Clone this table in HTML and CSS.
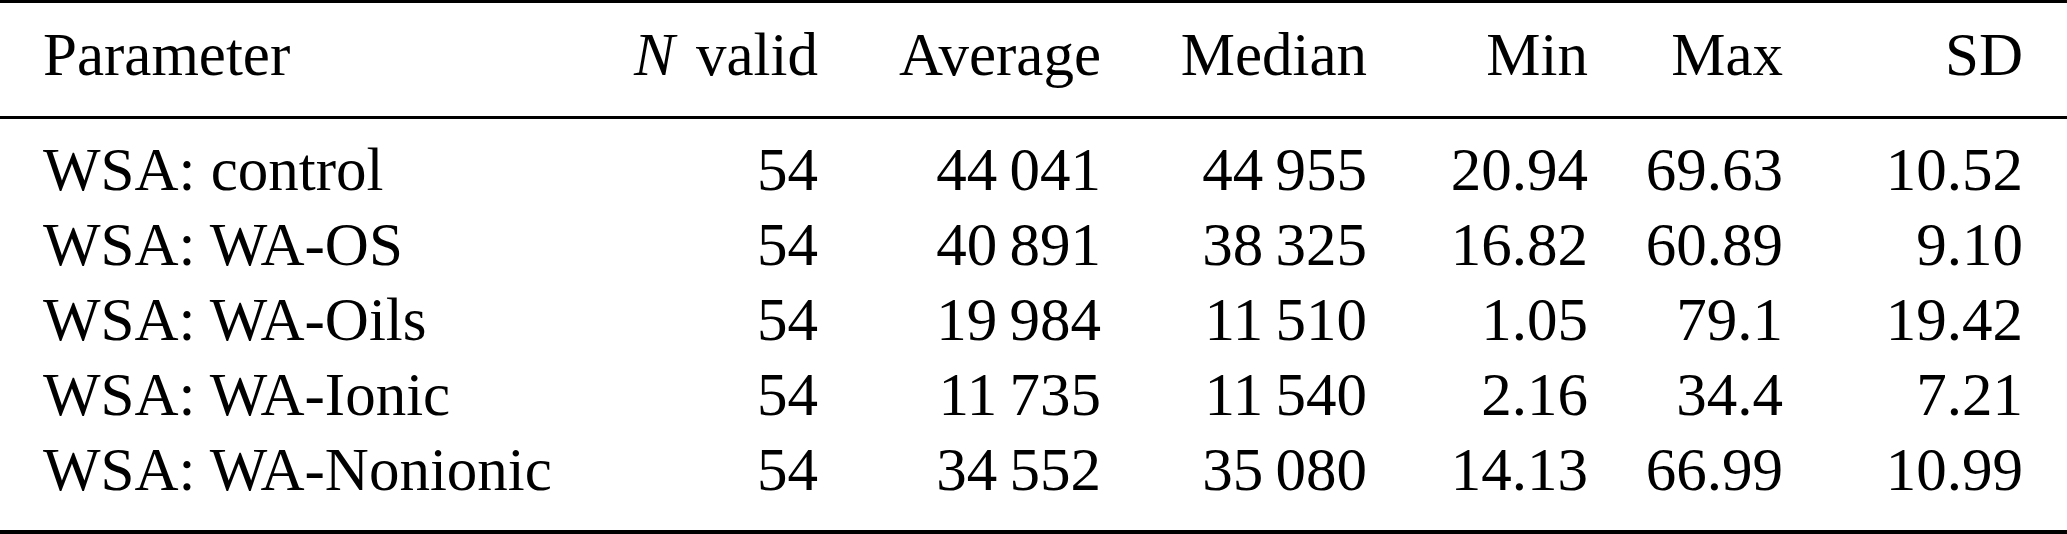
FILE: index.html
```html
<!DOCTYPE html>
<html lang="en">
<head>
    <meta charset="UTF-8">
    <meta name="viewport" content="width=device-width, initial-scale=1.0">
    <title>WSA Statistics</title>
    <link rel="stylesheet" href="styles.css">
</head>
<body>

<!-- Descriptive statistics table -->
<table class="stats">
    <colgroup>
        <col class="col-param">
        <col class="col-n">
        <col class="col-avg">
        <col class="col-med">
        <col class="col-min">
        <col class="col-max">
        <col class="col-sd">
    </colgroup>
    <thead>
        <tr>
            <th class="param">Parameter</th>
            <th><i>N</i> valid</th>
            <th>Average</th>
            <th>Median</th>
            <th>Min</th>
            <th>Max</th>
            <th class="last">SD</th>
        </tr>
    </thead>
    <tbody>
        <tr class="first">
            <td class="param">WSA: control</td>
            <td>54</td>
            <td>44&thinsp;041</td>
            <td>44&thinsp;955</td>
            <td>20.94</td>
            <td>69.63</td>
            <td class="last">10.52</td>
        </tr>
        <tr>
            <td class="param">WSA: WA-OS</td>
            <td>54</td>
            <td>40&thinsp;891</td>
            <td>38&thinsp;325</td>
            <td>16.82</td>
            <td>60.89</td>
            <td class="last">9.10</td>
        </tr>
        <tr>
            <td class="param">WSA: WA-Oils</td>
            <td>54</td>
            <td>19&thinsp;984</td>
            <td>11&thinsp;510</td>
            <td>1.05</td>
            <td>79.1</td>
            <td class="last">19.42</td>
        </tr>
        <tr>
            <td class="param">WSA: WA-Ionic</td>
            <td>54</td>
            <td>11&thinsp;735</td>
            <td>11&thinsp;540</td>
            <td>2.16</td>
            <td>34.4</td>
            <td class="last">7.21</td>
        </tr>
        <tr class="end">
            <td class="param">WSA: WA-Nonionic</td>
            <td>54</td>
            <td>34&thinsp;552</td>
            <td>35&thinsp;080</td>
            <td>14.13</td>
            <td>66.99</td>
            <td class="last">10.99</td>
        </tr>
    </tbody>
</table>

</body>
</html>
```

FILE: styles.css
```css
body {
    margin: 0;
    background-color: #ffffff;
    color: #000000;
    font-family: "Liberation Serif", "Times New Roman", serif;
}
.stats {
    width: 2067px;
    table-layout: fixed;
    border-collapse: separate;
    border-spacing: 0;
    font-size: 61px;
    line-height: 75px;
}
/* column right edges follow the original layout */
.col-param { width: 600px; }
.col-n { width: 218px; }
.col-avg { width: 283px; }
.col-med { width: 266px; }
.col-min { width: 221px; }
.col-max { width: 195px; }
.col-sd { width: 284px; }

.stats th, .stats td {
    padding: 0;
    text-align: right;
    font-weight: normal;
    white-space: nowrap;
}
.stats .param {
    text-align: left;
    padding-left: 43px;
}
.stats .last {
    padding-right: 44px;
}
.stats th i {
    font-style: italic;
    margin-right: 6px;
}
/* booktabs style rules */
.stats thead th {
    border-top: 3px solid #000000;
    border-bottom: 3px solid #000000;
    padding-top: 14px;
    padding-bottom: 24px;
}
.stats tr.first td {
    padding-top: 13px;
}
.stats tr.end td {
    padding-bottom: 23px;
    border-bottom: 4px solid #000000;
}
```
